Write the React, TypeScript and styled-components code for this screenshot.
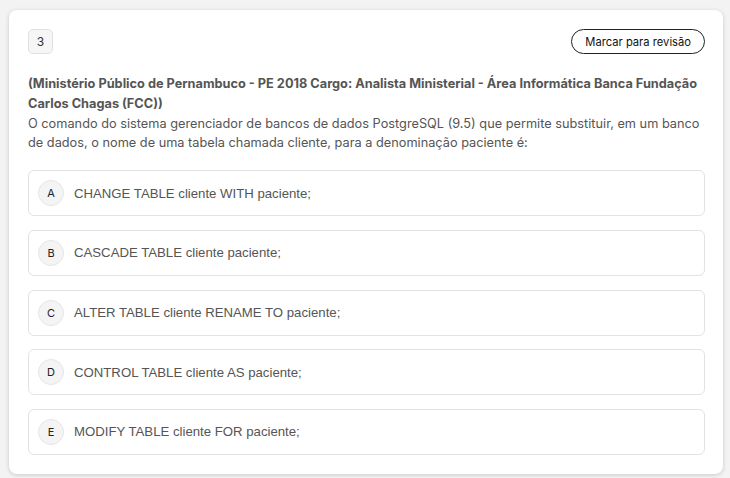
import styled, { createGlobalStyle } from 'styled-components';

const GlobalStyle = createGlobalStyle`
  html, body {
    margin: 0;
    padding: 0;
    background: #f3f3f3;
  }
  * {
    box-sizing: border-box;
  }
`;

const Page = styled.div`
  padding: 10px 7px 4px 9px;
  font-family: Inter, 'Noto Sans', sans-serif;
`;

const Card = styled.div`
  background: #ffffff;
  border-radius: 8px;
  box-shadow: 0 1px 4px rgba(0, 0, 0, 0.18);
  padding: 19px 18px 19px 19px;
`;

const Header = styled.div`
  display: flex;
  align-items: center;
  justify-content: space-between;
`;

const NumberBadge = styled.div`
  width: 25px;
  height: 25px;
  display: flex;
  align-items: center;
  justify-content: center;
  border: 1px solid #e0e0e0;
  border-radius: 5px;
  background: #f6f6f6;
  font-size: 12px;
  color: #333;
`;

const ReviewButton = styled.button`
  height: 25px;
  padding: 0 13px;
  border: 1px solid #222;
  border-radius: 999px;
  background: #fff;
  font-family: Inter, 'Noto Sans', sans-serif;
  font-size: 11.2px;
  color: #111;
  cursor: pointer;
`;

const Statement = styled.div`
  margin-top: 20px;
  font-size: 12.75px;
  line-height: 19.8px;
  color: #555;
`;

const Source = styled.div`
  font-weight: 700;
`;

const Options = styled.div`
  margin-top: 17px;
  display: flex;
  flex-direction: column;
  gap: 13.7px;
`;

const Option = styled.div`
  height: 46px;
  display: flex;
  align-items: center;
  gap: 10px;
  padding: 0 9px;
  border: 1px solid #e2e2e2;
  border-radius: 6px;
`;

const Letter = styled.span`
  width: 26px;
  height: 26px;
  flex: none;
  display: flex;
  align-items: center;
  justify-content: center;
  border-radius: 50%;
  border: 1px solid #e6e6e6;
  background: #f4f4f4;
  font-size: 11px;
  color: #222;
`;

const OptionText = styled.span`
  font-family: 'Liberation Sans', Arial, sans-serif;
  font-size: 13.2px;
  color: #555;
`;

const options = [
  { letter: 'A', text: 'CHANGE TABLE cliente WITH paciente;' },
  { letter: 'B', text: 'CASCADE TABLE cliente paciente;' },
  { letter: 'C', text: 'ALTER TABLE cliente RENAME TO paciente;' },
  { letter: 'D', text: 'CONTROL TABLE cliente AS paciente;' },
  { letter: 'E', text: 'MODIFY TABLE cliente FOR paciente;' },
];

export default function App() {
  return (
    <Page>
      <GlobalStyle />
      <Card>
        <Header>
          <NumberBadge>3</NumberBadge>
          <ReviewButton>Marcar para revisão</ReviewButton>
        </Header>
        <Statement>
          <Source>
            (Ministério Público de Pernambuco - PE 2018 Cargo: Analista Ministerial - Área
            Informática Banca Fundação Carlos Chagas (FCC))
          </Source>
          O comando do sistema gerenciador de bancos de dados PostgreSQL (9.5) que permite
          substituir, em um banco de dados, o nome de uma tabela chamada cliente, para a
          denominação paciente é:
        </Statement>
        <Options>
          {options.map((o) => (
            <Option key={o.letter}>
              <Letter>{o.letter}</Letter>
              <OptionText>{o.text}</OptionText>
            </Option>
          ))}
        </Options>
      </Card>
    </Page>
  );
}
